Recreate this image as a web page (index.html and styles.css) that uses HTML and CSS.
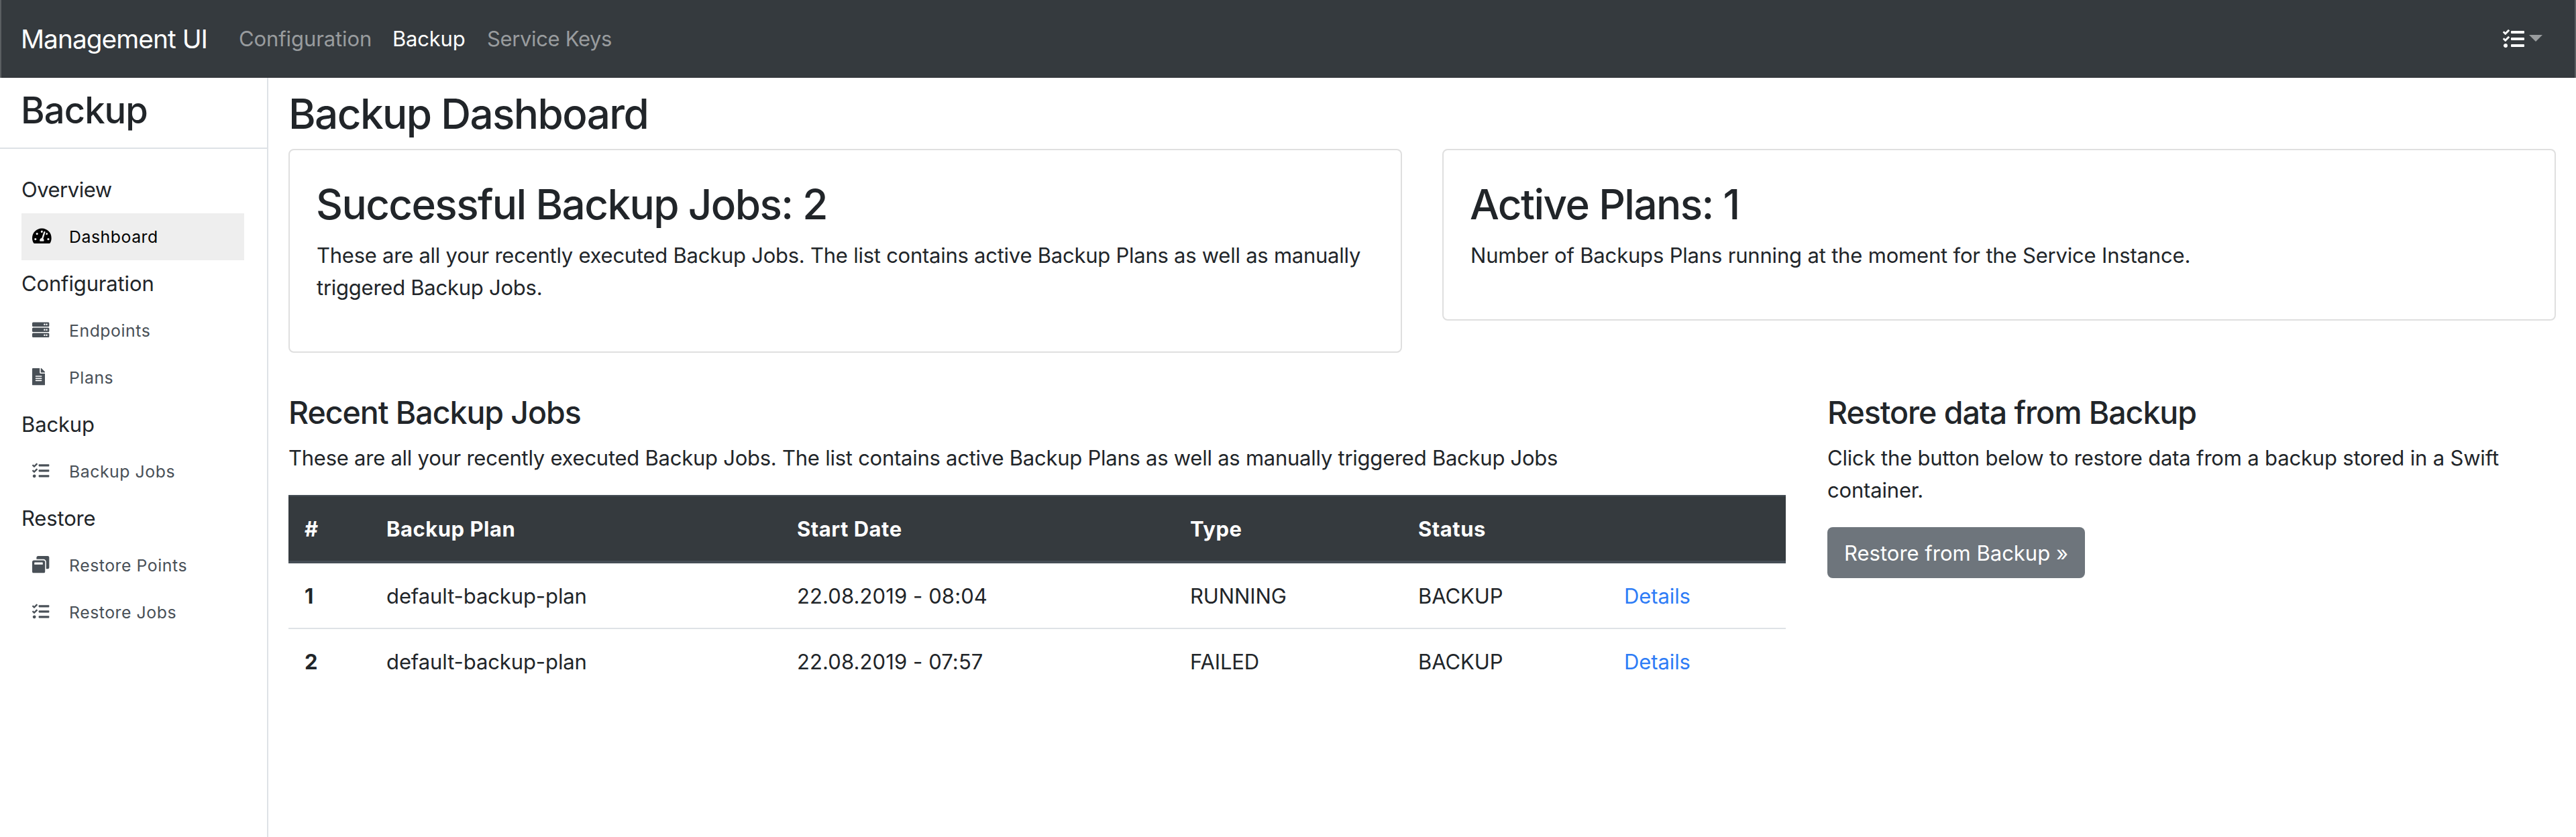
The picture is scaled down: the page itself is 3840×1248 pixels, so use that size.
FILE: index.html
```html
<!DOCTYPE html>
<html lang="en">
<head>
<meta charset="utf-8">
<title>Management UI</title>
<link rel="stylesheet" href="styles.css">
</head>
<body>
<svg class="sprite" aria-hidden="true">
  <symbol id="tasks" viewBox="0 0 512 512"><path d="M139.61 35.5a12 12 0 0 0-17 0L58.93 98.81l-22.7-22.12a12 12 0 0 0-17 0L3.53 92.41a12 12 0 0 0 0 17l47.59 47.4a12.78 12.78 0 0 0 17.61 0l15.59-15.62L156.52 69a12.09 12.09 0 0 0 .09-17zm0 159.19a12 12 0 0 0-17 0l-63.68 63.72-22.7-22.1a12 12 0 0 0-17 0L3.53 252a12 12 0 0 0 0 17L51 316.5a12.77 12.77 0 0 0 17.6 0l15.7-15.69 72.2-72.22a12 12 0 0 0 .09-16.9zM64 368c-26.49 0-48.59 21.5-48.59 48S37.53 464 64 464a48 48 0 0 0 0-96zm432 16H208a16 16 0 0 0-16 16v32a16 16 0 0 0 16 16h288a16 16 0 0 0 16-16v-32a16 16 0 0 0-16-16zm0-320H208a16 16 0 0 0-16 16v32a16 16 0 0 0 16 16h288a16 16 0 0 0 16-16V80a16 16 0 0 0-16-16zm0 160H208a16 16 0 0 0-16 16v32a16 16 0 0 0 16 16h288a16 16 0 0 0 16-16v-32a16 16 0 0 0-16-16z"/></symbol>
  <symbol id="gauge" viewBox="0 0 576 512"><path d="M288 32C128.94 32 0 160.94 0 320c0 52.8 14.25 102.26 39.06 144.8 5.61 9.62 16.3 15.2 27.44 15.2h443c11.14 0 21.83-5.58 27.44-15.2C561.75 422.26 576 372.8 576 320c0-159.06-128.94-288-288-288zm0 64c14.71 0 26.58 10.13 30.32 23.65-1.11 2.26-2.64 4.23-3.45 6.67l-9.22 27.67c-5.13 3.49-10.97 6.01-17.64 6.01-17.67 0-32-14.33-32-32S270.33 96 288 96zM96 384c-17.67 0-32-14.33-32-32s14.33-32 32-32 32 14.33 32 32-14.33 32-32 32zm48-160c-17.67 0-32-14.33-32-32s14.33-32 32-32 32 14.33 32 32-14.33 32-32 32zm246.77-72.41l-61.33 184C343.13 347.33 352 364.54 352 384c0 11.72-3.38 22.55-8.88 32H232.88c-5.5-9.45-8.88-20.28-8.88-32 0-33.94 26.5-61.43 59.9-63.59l61.34-184.01c4.17-12.56 17.73-19.45 30.36-15.17 12.57 4.19 19.35 17.79 15.17 30.36zm14.66 57.2l15.52-46.55c3.47-1.29 7.13-2.23 11.05-2.23 17.67 0 32 14.33 32 32s-14.33 32-32 32c-11.38-.01-20.89-6.28-26.57-15.22zM480 384c-17.67 0-32-14.33-32-32s14.33-32 32-32 32 14.33 32 32-14.33 32-32 32z"/></symbol>
  <symbol id="server" viewBox="0 0 512 512"><path fill-rule="evenodd" d="M480 160H32c-17.673 0-32-14.327-32-32V64c0-17.673 14.327-32 32-32h448c17.673 0 32 14.327 32 32v64c0 17.673-14.327 32-32 32zm-48-88a24 24 0 1 0 0 48 24 24 0 0 0 0-48zm-64 0a24 24 0 1 0 0 48 24 24 0 0 0 0-48zm112 248H32c-17.673 0-32-14.327-32-32v-64c0-17.673 14.327-32 32-32h448c17.673 0 32 14.327 32 32v64c0 17.673-14.327 32-32 32zm-48-88a24 24 0 1 0 0 48 24 24 0 0 0 0-48zm-64 0a24 24 0 1 0 0 48 24 24 0 0 0 0-48zm112 248H32c-17.673 0-32-14.327-32-32v-64c0-17.673 14.327-32 32-32h448c17.673 0 32 14.327 32 32v64c0 17.673-14.327 32-32 32zm-48-88a24 24 0 1 0 0 48 24 24 0 0 0 0-48zm-64 0a24 24 0 1 0 0 48 24 24 0 0 0 0-48z"/></symbol>
  <symbol id="file" viewBox="0 0 384 512"><path d="M224 136V0H24C10.7 0 0 10.7 0 24v464c0 13.3 10.7 24 24 24h336c13.3 0 24-10.7 24-24V160H248c-13.2 0-24-10.8-24-24zm64 236c0 6.6-5.4 12-12 12H108c-6.6 0-12-5.4-12-12v-8c0-6.6 5.4-12 12-12h168c6.6 0 12 5.4 12 12v8zm0-64c0 6.6-5.4 12-12 12H108c-6.6 0-12-5.4-12-12v-8c0-6.6 5.4-12 12-12h168c6.6 0 12 5.4 12 12v8zm0-72v8c0 6.6-5.4 12-12 12H108c-6.6 0-12-5.4-12-12v-8c0-6.6 5.4-12 12-12h168c6.6 0 12 5.4 12 12zm96-114.1v6.1H256V0h6.1c6.4 0 12.5 2.5 17 7l97.9 98c4.5 4.5 7 10.6 7 16.9z"/></symbol>
  <symbol id="restore" viewBox="0 0 512 512"><path d="M512 48v288c0 26.5-21.5 48-48 48h-48V176c0-44.1-35.9-80-80-80H128V48c0-26.5 21.5-48 48-48h288c26.5 0 48 21.5 48 48zM384 176v288c0 26.5-21.5 48-48 48H48c-26.5 0-48-21.5-48-48V176c0-26.5 21.5-48 48-48h288c26.5 0 48 21.5 48 48zm-68 28c0-6.6-5.4-12-12-12H76c-6.6 0-12 5.4-12 12v52h252v-52z"/></symbol>
</svg>

<header class="navbar">
  <a class="brand">Management UI</a>
  <nav class="nav-links">
    <a class="nav-link nav-config">Configuration</a>
    <a class="nav-link nav-backup active">Backup</a>
    <a class="nav-link nav-keys">Service Keys</a>
  </nav>
  <div class="nav-menu">
    <svg class="menu-icon"><use href="#tasks"/></svg>
    <span class="caret"></span>
  </div>
</header>

<div class="layout">
  <aside class="sidebar">
    <h2 class="side-title">Backup</h2>
    <nav class="side-nav">
      <h6 class="side-head overview">Overview</h6>
      <a class="side-item active"><svg class="icon icon-gauge"><use href="#gauge"/></svg><span>Dashboard</span></a>
      <h6 class="side-head">Configuration</h6>
      <a class="side-item"><svg class="icon"><use href="#server"/></svg><span>Endpoints</span></a>
      <a class="side-item"><svg class="icon icon-file"><use href="#file"/></svg><span>Plans</span></a>
      <h6 class="side-head">Backup</h6>
      <a class="side-item"><svg class="icon"><use href="#tasks"/></svg><span>Backup Jobs</span></a>
      <h6 class="side-head">Restore</h6>
      <a class="side-item"><svg class="icon"><use href="#restore"/></svg><span>Restore Points</span></a>
      <a class="side-item"><svg class="icon"><use href="#tasks"/></svg><span>Restore Jobs</span></a>
    </nav>
  </aside>

  <main class="main">
    <h1 class="title">Backup Dashboard</h1>
    <div class="cards">
      <section class="card">
        <h2 class="title">Successful Backup Jobs: 2</h2>
        <p class="text">These are all your recently executed Backup Jobs. The list contains active Backup Plans as well as manually triggered Backup Jobs.</p>
      </section>
      <section class="card">
        <h2 class="title">Active Plans: 1</h2>
        <p class="text narrow">Number of Backups Plans running at the moment for the Service Instance.</p>
      </section>
    </div>
    <div class="columns">
      <section class="jobs">
        <h3 class="subtitle">Recent Backup Jobs</h3>
        <p class="text">These are all your recently executed Backup Jobs. The list contains active Backup Plans as well as manually triggered Backup Jobs</p>
        <table class="table">
          <colgroup><col class="c-num"><col class="c-plan"><col class="c-date"><col class="c-type"><col class="c-status"><col class="c-link"></colgroup>
          <thead><tr><th>#</th><th>Backup Plan</th><th>Start Date</th><th>Type</th><th>Status</th><th></th></tr></thead>
          <tbody>
            <tr><th>1</th><td>default-backup-plan</td><td class="date">22.08.2019 - 08:04</td><td>RUNNING</td><td>BACKUP</td><td><a class="link">Details</a></td></tr>
            <tr><th>2</th><td>default-backup-plan</td><td class="date">22.08.2019 - 07:57</td><td>FAILED</td><td>BACKUP</td><td><a class="link">Details</a></td></tr>
          </tbody>
        </table>
      </section>
      <section class="restore">
        <h3 class="subtitle">Restore data from Backup</h3>
        <p class="text narrow">Click the button below to restore data from a backup stored in a Swift container.</p>
        <button class="btn">Restore from Backup »</button>
      </section>
    </div>
  </main>
</div>
</body>
</html>
```
FILE: styles.css
```css
* { box-sizing: border-box; }

body {
  margin: 0;
  height: 1248px;
  display: flex;
  flex-direction: column;
  overflow: hidden;
  background: #fff;
  color: #212529;
  font: 400 31px/48px Inter, "Liberation Sans", sans-serif;
}

h1, h2, h3, h6, p { margin: 0; }

.sprite { display: none; }

/* Top bar */
.navbar {
  flex: none;
  height: 116px;
  display: flex;
  align-items: center;
  padding: 0 48px 0 29px;
  background: #353a3e;
  border: solid #5a5e61;
  border-width: 0 2px;
  box-shadow: inset 0 -1px #2f3236;
}

.brand { width: 325px; color: #fff; font-size: 38.8px; letter-spacing: -.95px; }
.nav-links { display: flex; flex: 1; color: #999c9e; }
.nav-config { width: 229px; letter-spacing: -.1px; }
.nav-backup { width: 141px; letter-spacing: -.2px; }
.nav-keys { letter-spacing: -.36px; }
.nav-link.active { color: #fff; }
.nav-menu { display: flex; align-items: center; gap: 7px; }
.menu-icon { width: 32px; height: 32px; fill: #fff; }
.caret { border: solid transparent; border-width: 10px 10px 0; border-top-color: #999c9e; margin-top: -2px; }

.layout { flex: 1; display: flex; }

/* Sidebar */
.sidebar { width: 400px; flex: none; border-right: 2px solid #dee2e6; }

.side-title {
  height: 106px;
  padding: 15px 31px 0;
  border-bottom: 2px solid #dee2e6;
  font-size: 54.3px;
  font-weight: 500;
  line-height: 67px;
  letter-spacing: -.9px;
}

.side-nav { padding: 26px 34px 0 32px; }
.side-head { font-size: 31px; font-weight: 400; line-height: 70px; letter-spacing: -.15px; }
.side-head.overview { letter-spacing: -.5px; }

.side-item {
  display: flex;
  align-items: center;
  height: 70px;
  padding-left: 16px;
  color: #495057;
  font-size: 24.8px;
  letter-spacing: .55px;
}
.side-item.active { background: #eee; color: #000; }
.icon { width: 25.6px; height: 25.6px; margin: -2px 29.4px 0 0; fill: currentColor; }
.icon-gauge { width: 28.8px; margin-right: 26.2px; }
.icon-file { width: 19.2px; margin-right: 35.8px; }

/* Content */
.main { flex: 1; padding: 15px 30px 0; }

.title {
  margin-bottom: 14px;
  font-size: 62px;
  font-weight: 500;
  line-height: 77px;
  letter-spacing: -1.6px;
}

.cards { display: grid; grid-template-columns: 1fr 1fr; gap: 60px; align-items: start; }
.card { border: 2px solid #dfdfdf; border-radius: 8px; padding: 42px 40px 71px; }
.card .title { margin-left: -1px; }

.text { letter-spacing: -.25px; }
.text.narrow { letter-spacing: -.18px; }

.columns { display: grid; grid-template-columns: 2232px 1fr; gap: 62px; margin-top: 60px; }

.subtitle {
  margin-bottom: 15px;
  font-size: 46.5px;
  font-weight: 500;
  line-height: 58px;
  letter-spacing: -1.05px;
}

.table {
  width: 100%;
  margin-top: 31px;
  table-layout: fixed;
  border-collapse: separate;
  border-spacing: 0;
}
.c-num { width: 122px; }
.c-plan { width: 612px; }
.c-date { width: 586px; }
.c-type { width: 340px; }
.c-status { width: 307px; }
.c-link { width: 265px; }

.table th, .table td { padding: 25px 24px 23px; text-align: left; font-weight: 400; }
.table th { font-weight: 700; letter-spacing: .5px; }
.table thead th {
  background: #353a3e;
  color: #fff;
  border-top: 2px solid #454d55;
  border-bottom: 4px solid #454d55;
}
.table tbody tr + tr > * { border-top: 2px solid #dee2e6; }
.table td { letter-spacing: -.1px; }
.table td.date { letter-spacing: .1px; }
.link { color: #2e7cf6; }

.btn {
  display: block;
  width: 384px;
  height: 76px;
  margin-top: 31px;
  padding: 2px 0 0;
  border: 0;
  border-radius: 8px;
  background: #6e757c;
  color: #fff;
  font: inherit;
}
```
